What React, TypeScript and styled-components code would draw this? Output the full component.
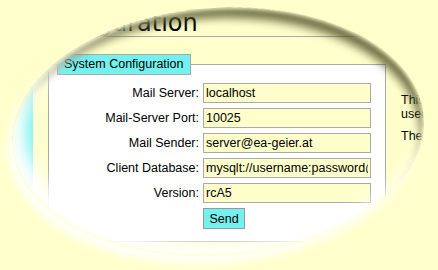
import { Fragment } from "react";
import styled, { createGlobalStyle } from "styled-components";

const GlobalStyle = createGlobalStyle`
  html,
  body {
    margin: 0;
    padding: 0;
    background: #ffffcc;
    overflow: hidden;
  }

  body {
    font-family: "Liberation Sans", Arial, sans-serif;
    font-size: 12.5px;
    color: #000;
  }
`;

const Colors = {
  paper: "#ffffcc",
  cyan: "#74f1ef",
  border: "#a9a9a9",
};

const Page = styled.div`
  display: flex;
  height: 100vh;
`;

const Sidebar = styled.div`
  width: 33px;
  flex-shrink: 0;
  background: ${Colors.cyan};
`;

const Main = styled.div`
  flex: 1;
  min-width: 0;
  padding-left: 2px;
`;

const Title = styled.h1`
  margin: 0;
  padding-top: 10px;
  font-family: "DejaVu Sans", Verdana, sans-serif;
  font-size: 24px;
  font-weight: normal;
  line-height: 26px;
  white-space: nowrap;
  border-bottom: 1px solid ${Colors.border};
`;

const Body = styled.div`
  display: flex;
  align-items: flex-start;
  gap: 15px;
  margin-top: 17px;
  padding-left: 13px;
`;

const Fieldset = styled.fieldset`
  box-sizing: border-box;
  flex-shrink: 0;
  width: 338px;
  margin: 0;
  padding: 8px 13px 12px 8px;
  background: #fff;
  border: 1px solid ${Colors.border};
`;

const Legend = styled.legend`
  padding: 2px 6px;
  line-height: 15px;
  background: ${Colors.cyan};
  border: 1px solid ${Colors.border};
`;

const Form = styled.div`
  display: grid;
  grid-template-columns: 142px 168px;
  column-gap: 4px;
  row-gap: 5px;
  align-items: center;
`;

const Label = styled.label`
  text-align: right;
  white-space: nowrap;
`;

const Input = styled.input`
  box-sizing: border-box;
  width: 168px;
  height: 20px;
  margin: 0;
  padding: 0 2px;
  font: inherit;
  background: ${Colors.paper};
  border: 1px solid ${Colors.border};
  outline: none;
`;

const Button = styled.button`
  grid-column: 2;
  justify-self: start;
  box-sizing: border-box;
  width: 42px;
  height: 21px;
  margin: 0;
  padding: 0;
  font: inherit;
  background: ${Colors.cyan};
  border: 1px solid #999;
`;

const Aside = styled.div`
  flex: 1;
  min-width: 0;
  padding-top: 39px;

  p {
    margin: 0 0 8px;
    line-height: 14px;
  }
`;

// the oval cut-out laid over the whole screenshot
const Vignette = styled.div`
  position: fixed;
  left: 12px;
  top: 8px;
  width: 412px;
  height: 248px;
  border-radius: 50%;
  transform: rotate(-4deg);
  pointer-events: none;
  z-index: 10;
  box-shadow:
    -5px 7px 9px 0 rgba(255, 255, 255, 0.9),
    0 0 0 700px ${Colors.paper},
    inset 0 0 4px 1px ${Colors.paper},
    inset 12px -10px 15px 3px rgba(255, 255, 255, 0.95),
    inset -6px 12px 9px -2px rgba(80, 80, 40, 0.8);
`;

const fields = [
  { label: "Mail Server:", value: "localhost" },
  { label: "Mail-Server Port:", value: "10025" },
  { label: "Mail Sender:", value: "server@ea-geier.at" },
  { label: "Client Database:", value: "mysqlt://username:password@localhost/eageier" },
  { label: "Version:", value: "rcA5" },
];

const App = () => {
  const renderFields = fields.map((field) => (
    <Fragment key={field.label}>
      <Label>{field.label}</Label>
      <Input defaultValue={field.value} />
    </Fragment>
  ));

  return (
    <>
      <GlobalStyle />
      <Page>
        <Sidebar />
        <Main>
          <Title>Configuration</Title>
          <Body>
            <Fieldset>
              <Legend>System Configuration</Legend>
              <Form>
                {renderFields}
                <Button>Send</Button>
              </Form>
            </Fieldset>
            <Aside>
              <p>This is used.</p>
              <p>There.</p>
            </Aside>
          </Body>
        </Main>
      </Page>
      <Vignette />
    </>
  );
};

export default App;
